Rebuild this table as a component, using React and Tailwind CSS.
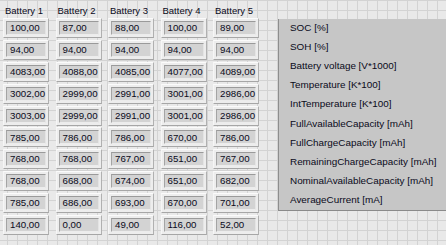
import React from "react";

const batteries = ["Battery 1", "Battery 2", "Battery 3", "Battery 4", "Battery 5"];

// rows of values, one array per measurement, five batteries each
const rows = [
  ["100,00", "87,00", "88,00", "100,00", "89,00"],
  ["94,00", "94,00", "94,00", "94,00", "94,00"],
  ["4083,00", "4088,00", "4085,00", "4077,00", "4089,00"],
  ["3002,00", "2999,00", "2991,00", "3001,00", "2986,00"],
  ["3003,00", "2999,00", "2991,00", "3001,00", "2986,00"],
  ["785,00", "786,00", "786,00", "670,00", "786,00"],
  ["768,00", "768,00", "767,00", "651,00", "767,00"],
  ["768,00", "668,00", "674,00", "651,00", "682,00"],
  ["785,00", "686,00", "693,00", "670,00", "701,00"],
  ["140,00", "0,00", "49,00", "116,00", "52,00"],
];

const labels = [
  "SOC [%]",
  "SOH [%]",
  "Battery voltage [V*1000]",
  "Temperature [K*100]",
  "IntTemperature [K*100]",
  "FullAvailableCapacity [mAh]",
  "FullChargeCapacity [mAh]",
  "RemainingChargeCapacity [mAh]",
  "NominalAvailableCapacity [mAh]",
  "AverageCurrent [mA]",
];

function Indicator({ value }) {
  return (
    <div className="w-[46px] h-[20px] p-[2px] bg-[#ededed] border border-t-[#fbfbfb] border-l-[#f6f6f6] border-r-[#b0b0b0] border-b-[#a6a6a6]">
      <div className="h-full bg-[#d3d3d3] border border-t-[#9a9a9a] border-l-[#a4a4a4] border-r-[#e4e4e4] border-b-[#ececec] flex items-center pl-[3px] text-[9.7px] text-[#0a0a1a] leading-none">
        {value}
      </div>
    </div>
  );
}

export default function App() {
  return (
    <div
      className="w-[446px] h-[245px] overflow-hidden flex bg-[#e9e9e9] bg-[linear-gradient(to_right,#d3d3d3_1px,transparent_1px),linear-gradient(to_bottom,#d3d3d3_1px,transparent_1px)] bg-[size:10px_10px] bg-[position:7px_0px]"
      style={{ fontFamily: '"Liberation Sans", Arial, sans-serif' }}
    >
      {/* indicator columns */}
      <div className="w-[278px] shrink-0 pl-[3px] pt-[4px] flex">
        {batteries.map((b, c) => (
          <div key={b} className="w-[52.5px] flex flex-col">
            <div className="h-[14px] pl-[2px] text-[9.5px] leading-[13px] text-[#0a0a1a]">{b}</div>
            <div className="flex flex-col gap-[1.9px]">
              {rows.map((r, i) => (
                <Indicator key={i} value={r[c]} />
              ))}
            </div>
          </div>
        ))}
      </div>

      {/* list of measurement names */}
      <div className="mt-[19px] w-[180px] h-[192px] shrink-0 bg-[#c6c6c6] border-l border-b border-l-[#8e8e8e] border-b-[#8a8a8a] flex flex-col">
        {labels.map((l) => (
          <div key={l} className="h-[19.2px] flex items-center pl-[11px] text-[9.9px] text-[#0a0a1a] whitespace-nowrap">
            {l}
          </div>
        ))}
      </div>
    </div>
  );
}
